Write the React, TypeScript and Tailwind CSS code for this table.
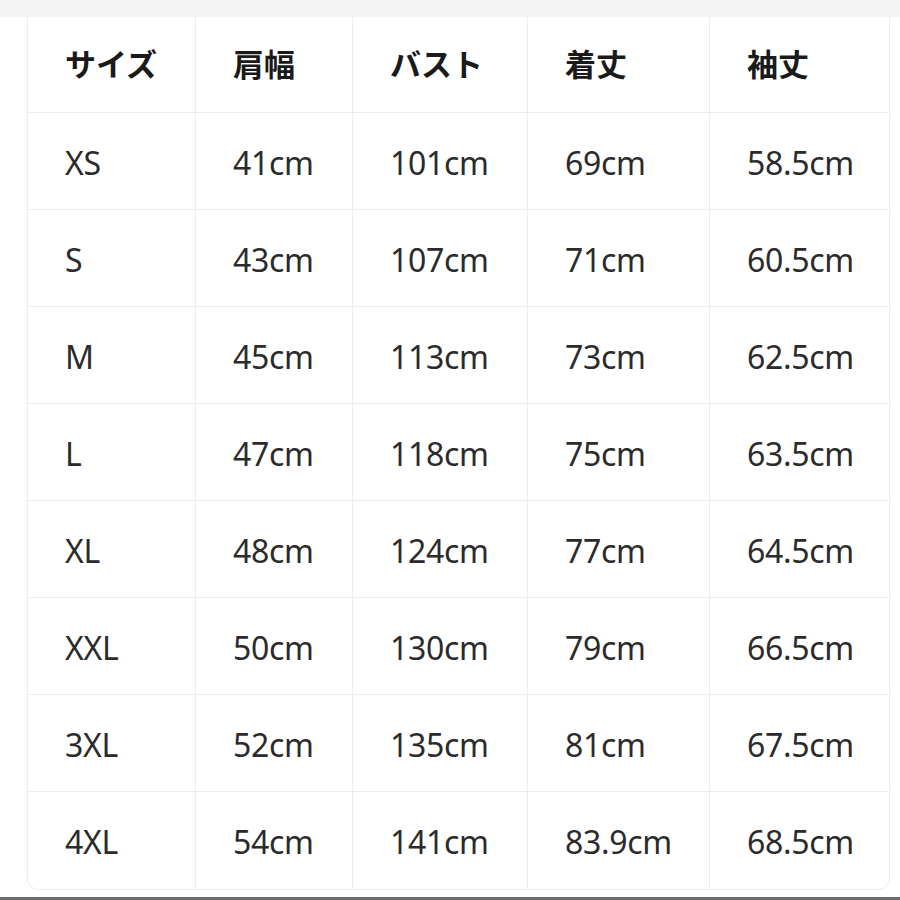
import React from "react";

const headers = ["サイズ", "肩幅", "バスト", "着丈", "袖丈"];

const rows = [
  ["XS", "41cm", "101cm", "69cm", "58.5cm"],
  ["S", "43cm", "107cm", "71cm", "60.5cm"],
  ["M", "45cm", "113cm", "73cm", "62.5cm"],
  ["L", "47cm", "118cm", "75cm", "63.5cm"],
  ["XL", "48cm", "124cm", "77cm", "64.5cm"],
  ["XXL", "50cm", "130cm", "79cm", "66.5cm"],
  ["3XL", "52cm", "135cm", "81cm", "67.5cm"],
  ["4XL", "54cm", "141cm", "83.9cm", "68.5cm"],
];

const font = {
  fontFamily: '"Noto Sans", "Noto Sans CJK JP", sans-serif',
};

const SizeTable = () => {
  return (
    <div className="w-[900px] h-[900px] bg-white flex flex-col" style={font}>
      {/* top band */}
      <div className="h-[17px] bg-[#f4f4f4] shrink-0" />

      <div className="pl-[27px] pr-[10px]">
        <div className="grid grid-cols-[168px_157px_175px_182px_181px] grid-rows-[96px_repeat(8,97px)] border-x border-b border-[#ededed] rounded-b-[12px] overflow-hidden bg-white">
          {headers.map((h, i) => (
            <div
              key={h}
              className={`flex items-center pl-[37px] border-b border-[#ededed] text-[31px] font-bold text-[#1a1a1a] ${
                i < headers.length - 1 ? "border-r" : ""
              }`}
            >
              {h}
            </div>
          ))}
          {rows.map((row, r) =>
            row.map((cell, i) => (
              <div
                key={`${r}-${i}`}
                className={`flex items-center pl-[37px] pt-[3px] border-[#ededed] text-[32px] text-[#2b2b2b] tracking-[-0.3px] ${
                  i < row.length - 1 ? "border-r" : ""
                } ${r < rows.length - 1 ? "border-b" : ""}`}
              >
                {cell}
              </div>
            ))
          )}
        </div>
      </div>

      <div className="flex-1" />
      <div className="h-[3px] bg-[#6b6b6b] shrink-0" />
    </div>
  );
};

export default function App() {
  return <SizeTable />;
}
